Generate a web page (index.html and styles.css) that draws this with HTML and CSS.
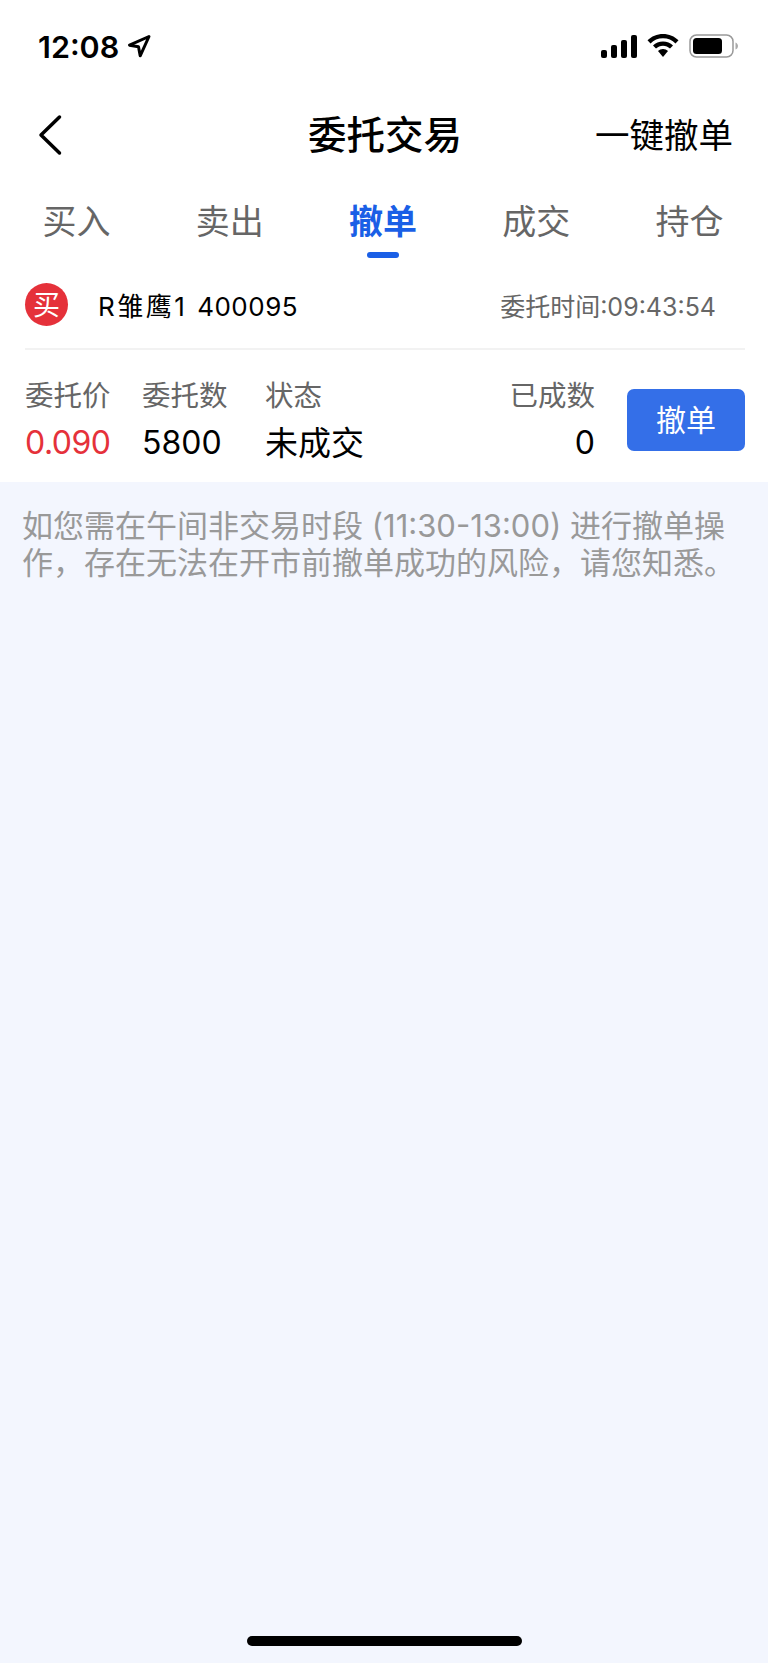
FILE: index.html
```html
<!DOCTYPE html>
<html lang="zh-CN">
  <head>
    <meta charset="UTF-8">
    <meta name="viewport" content="width=device-width, initial-scale=1.0">
    <title>委托交易</title>
    <link rel="stylesheet" href="styles.css">
  </head>
  <body>
    <div class="status-bar">
      <div class="status-time">
        <span>12:08</span>
        <svg class="status-arrow" width="24" height="24" viewBox="0 0 24 24">
          <path d="M22 2.500 2.500 11.200l9 1.600 1.700 9z" fill="none" stroke="#000" stroke-width="3" stroke-linejoin="round"/>
        </svg>
      </div>
      <div class="status-icons">
        <svg width="36" height="23" viewBox="0 0 36 23">
          <rect x="0" y="15" width="6" height="8" rx="2"/>
          <rect x="10" y="10" width="6" height="13" rx="2"/>
          <rect x="20" y="5" width="6" height="18" rx="2"/>
          <rect x="30" y="0" width="6" height="23" rx="2"/>
        </svg>
        <svg width="32" height="24" viewBox="0 0 32 24">
          <path d="M16 0C10 0 4.500 2.300.5 6.300l3 3.100C6.700 6.200 11.100 4.300 16 4.300s9.300 1.900 12.500 5.100l3-3.100C27.500 2.300 22 0 16 0z"/>
          <path d="M16 7.500c-3.900 0-7.400 1.500-10 4l3 3.100c1.800-1.700 4.300-2.800 7-2.800s5.200 1.100 7 2.800l3-3.100c-2.600-2.500-6.100-4-10-4z"/>
          <path d="M16 15c-1.900 0-3.700.8-5 2l5 6 5-6c-1.300-1.200-3.100-2-5-2z"/>
        </svg>
        <svg width="50" height="24" viewBox="0 0 50 24">
          <rect x="1" y="1" width="43" height="22" rx="6.500" fill="none" stroke="#999" stroke-width="1.500"/>
          <rect x="4" y="4" width="29" height="16" rx="3.500"/>
          <path d="M46.500 8.500c1.500.5 2.500 2 2.500 3.500s-1 3-2.500 3.500z" fill="#aaa"/>
        </svg>
      </div>
    </div>

    <div class="nav-bar">
      <svg class="nav-back" width="26" height="42" viewBox="0 0 26 42">
        <path d="M22.500 3 4 21l18.500 18" fill="none" stroke="#000" stroke-width="3.500" stroke-linecap="round" stroke-linejoin="round"/>
      </svg>
      <div class="nav-title">委托交易</div>
      <div class="nav-action">一键撤单</div>
    </div>

    <div class="tabs">
      <div class="tab">买入</div>
      <div class="tab">卖出</div>
      <div class="tab tab-active">撤单</div>
      <div class="tab">成交</div>
      <div class="tab">持仓</div>
    </div>

    <div class="order">
      <div class="order-head">
        <div class="buy-badge">买</div>
        <div class="order-name"><span class="stock-name">R雏鹰1</span> <span>400095</span></div>
        <div class="order-time">委托时间:09:43:54</div>
      </div>
      <div class="order-body">
        <div class="field field-price">
          <div class="field-label">委托价</div>
          <div class="field-value price">0.090</div>
        </div>
        <div class="field field-count">
          <div class="field-label">委托数</div>
          <div class="field-value">5800</div>
        </div>
        <div class="field field-state">
          <div class="field-label">状态</div>
          <div class="field-value">未成交</div>
        </div>
        <div class="field field-done">
          <div class="field-label">已成数</div>
          <div class="field-value">0</div>
        </div>
        <button type="button" class="cancel-btn">撤单</button>
      </div>
    </div>

    <div class="content">
      <p class="notice">如您需在午间非交易时段 (11:30-13:00) 进行撤单操作，存在无法在开市前撤单成功的风险，请您知悉。</p>
      <div class="home-bar"></div>
    </div>
  </body>
</html>
```

FILE: styles.css
```css
* {
  box-sizing: border-box;
}

body {
  display: flex;
  flex-direction: column;
  height: 100vh;
  margin: 0;
  background-color: #fff;
  color: #000;
  font-family: Inter, "Noto Sans CJK SC", sans-serif;
}

.status-bar {
  display: flex;
  justify-content: space-between;
  align-items: center;
  height: 92px;
  padding: 0 29px 0 38px;
}

.status-time {
  display: flex;
  align-items: center;
  gap: 8px;
  font-size: 30.500px;
  font-weight: 600;
}

.status-icons {
  display: flex;
  align-items: center;
  gap: 10px;
}

.nav-bar {
  display: grid;
  grid-template-columns: 1fr auto 1fr;
  align-items: center;
  height: 86px;
  padding: 0 35px 0 37px;
}

.nav-back {
  width: 26px;
}

.nav-title {
  padding-bottom: 6px;
  font-size: 38.500px;
  font-weight: 500;
}

.nav-action {
  justify-self: end;
  padding-bottom: 4px;
  font-size: 34.500px;
}

.tabs {
  display: grid;
  grid-template-columns: repeat(5, 1fr);
  height: 80px;
  padding-right: 2px;
}

.tab {
  position: relative;
  padding-top: 17px;
  color: #666;
  font-size: 34px;
  text-align: center;
}

.tab-active {
  color: #1a5fe6;
  font-weight: 700;
}

.tab-active::after {
  content: "";
  position: absolute;
  left: 50%;
  top: 74px;
  width: 32px;
  height: 6px;
  margin-left: -16px;
  border-radius: 3px;
  background-color: #1a5fe6;
}

.order {
  padding: 0 23px 0 25px;
}

.order-head {
  display: flex;
  align-items: center;
  height: 92px;
  padding-top: 3px;
  border-bottom: 2px solid #f2f2f2;
}

.buy-badge {
  display: flex;
  justify-content: center;
  align-items: center;
  width: 43px;
  height: 43px;
  padding-bottom: 2px;
  border-radius: 50%;
  background-color: #e5313a;
  color: #fff;
  font-size: 27px;
}

.order-name {
  margin-left: 30px;
  font-size: 26px;
  letter-spacing: 0.500px;
  word-spacing: 2px;
}

.stock-name {
  letter-spacing: 2.500px;
}

.order-time {
  margin-left: auto;
  margin-right: 29px;
  color: #666;
  font-size: 25px;
}

.order-body {
  display: flex;
  align-items: center;
  height: 132px;
  padding-top: 7px;
}

.field-label {
  color: #666;
  font-size: 28.500px;
  line-height: 38px;
}

.field-value {
  margin-top: 8px;
  font-size: 32px;
  line-height: 40px;
}

.price {
  color: #e5313a;
  letter-spacing: -0.500px;
}

.field-price {
  width: 117px;
}

.field-count {
  width: 123px;
}

.field-state {
  width: 180px;
}

.field-state .field-value {
  font-size: 33px;
}

.field-done {
  width: 110px;
  margin-left: auto;
  text-align: right;
}

.cancel-btn {
  width: 118px;
  height: 62px;
  margin-left: 32px;
  padding: 0 0 4px;
  border: 0;
  border-radius: 7px;
  background-color: #346fe8;
  color: #fff;
  font-family: inherit;
  font-size: 30px;
}

.content {
  display: flex;
  flex: 1;
  flex-direction: column;
  background-color: #f3f6fe;
}

.notice {
  margin: 25px 0 0;
  padding: 0 24px 0 22px;
  color: #999;
  font-size: 31px;
  line-height: 37px;
}

.home-bar {
  width: 275px;
  height: 10px;
  margin: auto auto 17px;
  border-radius: 5px;
  background-color: #000;
}
```
